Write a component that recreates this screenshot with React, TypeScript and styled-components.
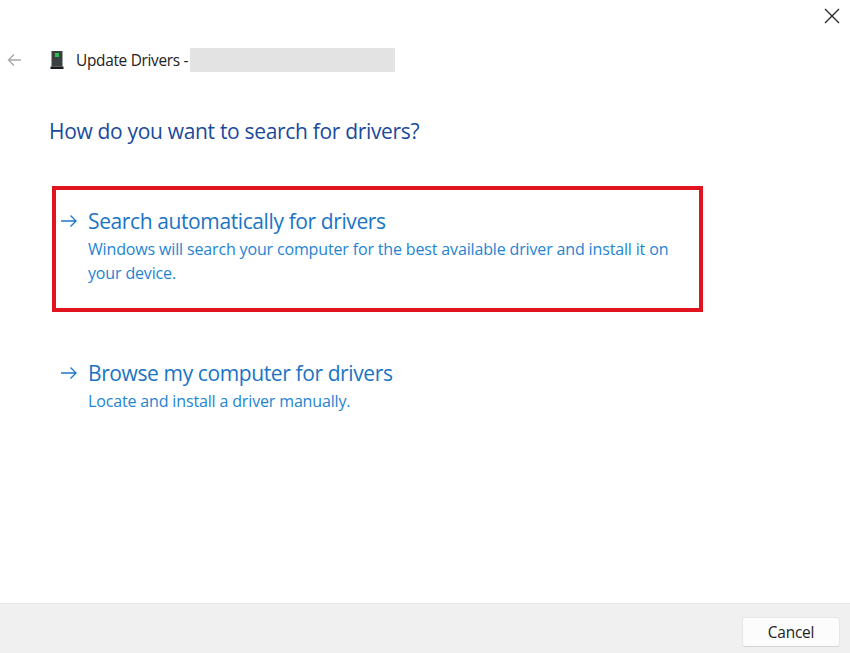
import React from "react";
import styled, { createGlobalStyle } from "styled-components";

const Global = createGlobalStyle`
  html, body { margin: 0; padding: 0; background: #fff; }
  body { font-family: "Open Sans", "Noto Sans", "Liberation Sans", sans-serif; }
`;
const Windowed = styled.div`
  width: 850px; height: 653px; display: flex; flex-direction: column; overflow: hidden; background: #fff;
`;
const TopBar = styled.div`
  height: 32px; display: flex; justify-content: flex-end; align-items: flex-start; padding: 8px 10px 0 0; box-sizing: border-box;
`;
const CloseIcon = styled.svg`
  width: 16px; height: 16px; display: block;
`;
const TitleRow = styled.div`
  height: 24px; margin-top: 16px; display: flex; align-items: center; padding-left: 7px;
`;
const BackIcon = styled.svg`
  width: 15px; height: 14px; margin-right: 27px;
`;
const DeviceIcon = styled.svg`
  width: 16px; height: 20px; margin-right: 11px;
`;
const TitleText = styled.span`
  font-size: 15.4px; color: #222; letter-spacing: -0.3px; white-space: nowrap; width: 114px; overflow: hidden;
`;
const Redacted = styled.div`
  width: 205px; height: 24px; background: #e3e3e3;
`;
const Heading = styled.h1`
  margin: 44px 0 0 49px; font-size: 21px; line-height: 30px; font-weight: 400; color: #1a4a9c; letter-spacing: -0.32px; white-space: nowrap;
`;
const OptionSlot = styled.div<{ $top: number }>`
  margin-top: ${(p) => p.$top}px;
`;
const Option = styled.div<{ $marked?: boolean }>`
  box-sizing: border-box; width: 651px; margin-left: 52px;
  height: ${(p) => (p.$marked ? "126px" : "70px")};
  border: 4px solid ${(p) => (p.$marked ? "#e0141f" : "transparent")};
  padding: 16px 0 0 4px; display: flex; align-items: flex-start;
`;
const ArrowIcon = styled.svg`
  width: 18px; height: 14px; margin: 8px 10px 0 0; flex: none;
`;
const OptionBody = styled.div`
  display: flex; flex-direction: column; width: 590px;
`;
const OptionTitle = styled.div`
  font-size: 21px; line-height: 30px; color: #1a74c4; letter-spacing: -0.39px; white-space: nowrap;
`;
const OptionDesc = styled.div`
  font-size: 16px; line-height: 24px; margin-top: 1px; color: #2484d4; letter-spacing: -0.15px;
`;
const Spacer = styled.div`
  flex: 1;
`;
const Footer = styled.div`
  box-sizing: border-box; height: 50px; background: #f0f0f0; border-top: 1px solid #e8e8e8;
  display: flex; justify-content: flex-end; align-items: flex-start; padding: 13px 10px 0 0;
`;
const CancelButton = styled.button`
  width: 98px; height: 30px; border: 1px solid #e6e6e6; border-bottom-color: #d4d4d4; border-radius: 3px; background: #fcfcfc;
  font-family: inherit; font-size: 15.4px; color: #222; padding: 0; letter-spacing: -0.2px;
`;

const Arrow = () => (
  <ArrowIcon viewBox="0 0 18 14" fill="none" stroke="#1b78c8" strokeWidth="1.3">
    <path d="M1 7h15M10.500 1.500 16 7l-5.500 5.500" />
  </ArrowIcon>
);

export default function App() {
  return (
    <Windowed>
      <Global />
      <TopBar>
        <CloseIcon viewBox="0 0 16 16" fill="none" stroke="#2b2b2b" strokeWidth="1.4">
          <path d="M1 1l14 14M15 1 1 15" />
        </CloseIcon>
      </TopBar>
      <TitleRow>
        <BackIcon viewBox="0 0 15 14" fill="none" stroke="#a8a8a8" strokeWidth="1.4">
          <path d="M14 7H1.500M7 1.500 1.500 7 7 12.500" />
        </BackIcon>
        <DeviceIcon viewBox="0 0 16 20">
          <path d="M2.500 1h11v15.500h-11z" fill="#3a4042" />
          <path d="M1.500 16.500h13v2.500h-13z" fill="#17191a" />
          <path d="M6 3h4v4H6z" fill="#2fbf48" />
        </DeviceIcon>
        <TitleText>Update Drivers -</TitleText>
        <Redacted />
      </TitleRow>
      <Heading>How do you want to search for drivers?</Heading>
      <OptionSlot $top={40}>
        <Option $marked>
          <Arrow />
          <OptionBody>
            <OptionTitle>Search automatically for drivers</OptionTitle>
            <OptionDesc>Windows will search your computer for the best available driver and install it on your device.</OptionDesc>
          </OptionBody>
        </Option>
      </OptionSlot>
      <OptionSlot $top={26}>
        <Option>
          <Arrow />
          <OptionBody>
            <OptionTitle>Browse my computer for drivers</OptionTitle>
            <OptionDesc>Locate and install a driver manually.</OptionDesc>
          </OptionBody>
        </Option>
      </OptionSlot>
      <Spacer />
      <Footer>
        <CancelButton>Cancel</CancelButton>
      </Footer>
    </Windowed>
  );
}
